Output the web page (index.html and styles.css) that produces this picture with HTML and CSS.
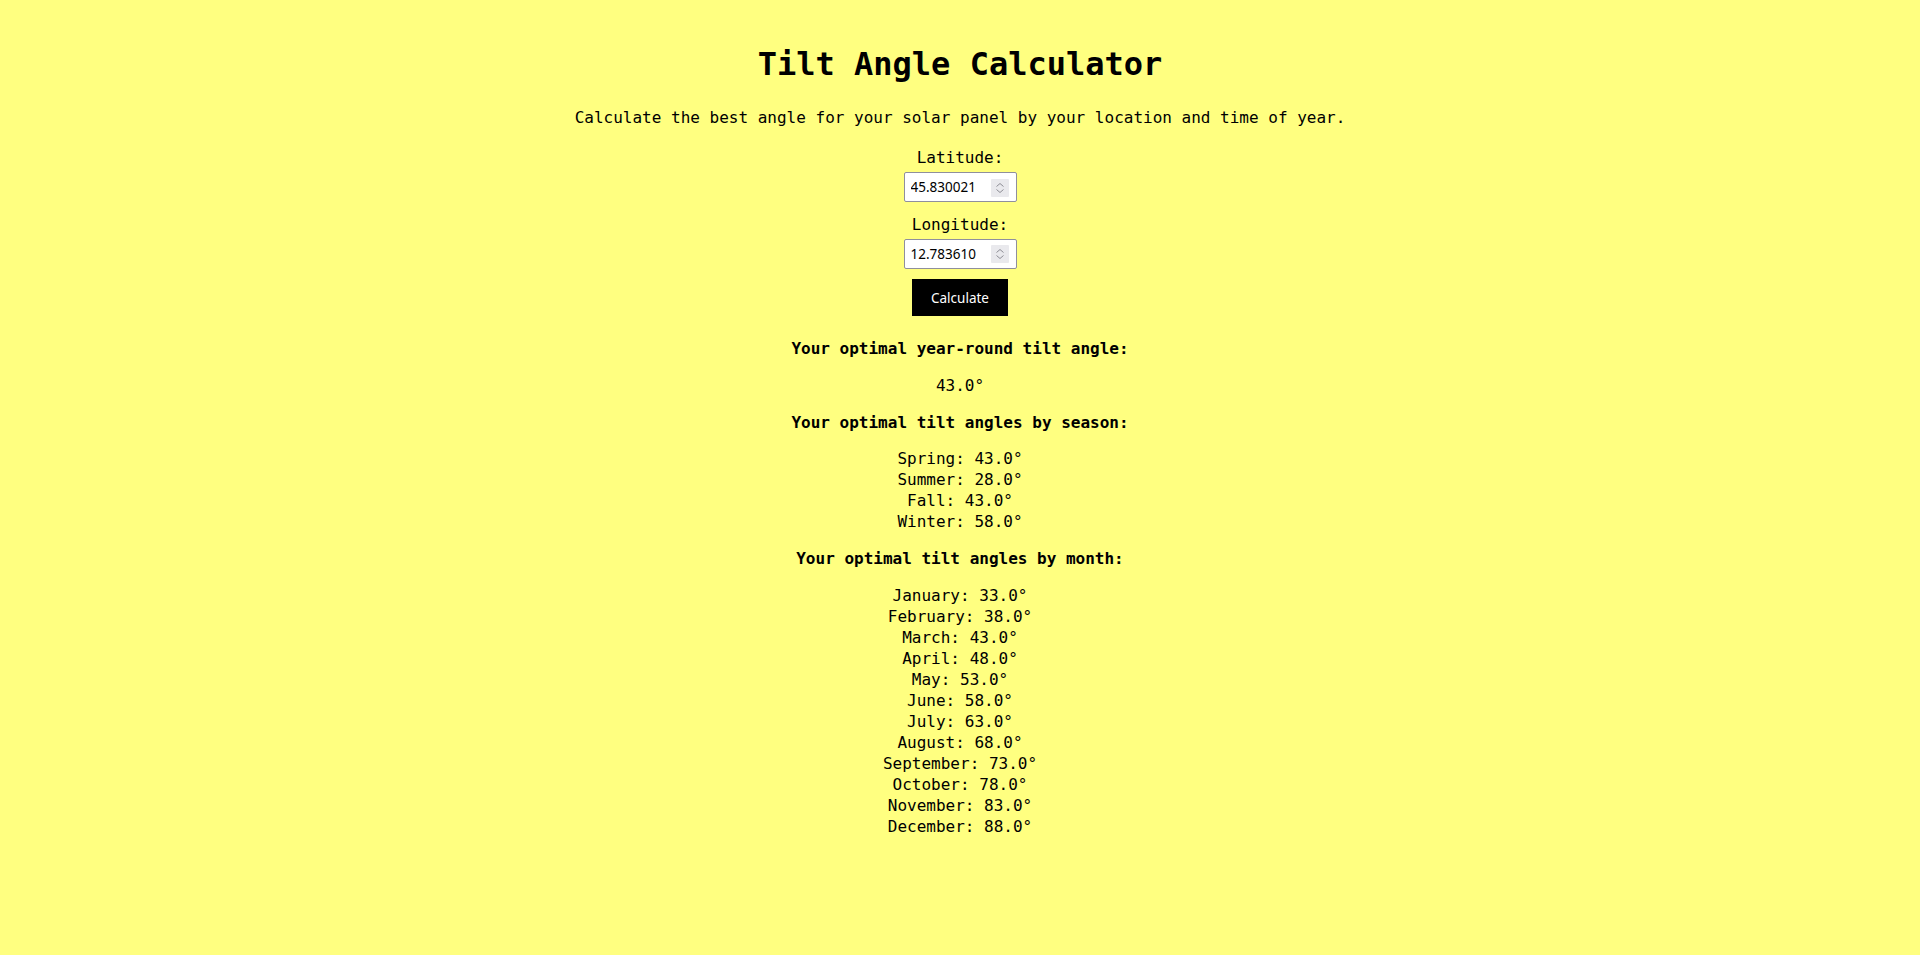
FILE: index.html
```html
<!DOCTYPE html>
<html lang="en">
<head>
<meta charset="utf-8">
<title>Tilt Angle Calculator</title>
<link rel="stylesheet" href="styles.css">
</head>
<body>
<main class="calculator">
  <h1 class="title">Tilt Angle Calculator</h1>
  <p class="subtitle">Calculate the best angle for your solar panel by your location and time of year.</p>
  <form class="calc-form">
    <label class="field-label" for="lat">Latitude:</label>
    <span class="field-wrap">
      <input class="field-input" id="lat" type="number" value="45.830021" step="any">
      <span class="spinner" aria-hidden="true">
        <svg width="18" height="18" viewBox="0 0 18 18"><path d="M5.5 7.5 L9 4.5 L12.5 7.5" fill="none" stroke="#8d8d95" stroke-width="1"/><path d="M5.5 10.5 L9 13.5 L12.5 10.5" fill="none" stroke="#8d8d95" stroke-width="1"/></svg>
      </span>
    </span>
    <label class="field-label field-label-second" for="lon">Longitude:</label>
    <span class="field-wrap">
      <input class="field-input" id="lon" type="number" value="12.783610" step="any">
      <span class="spinner" aria-hidden="true">
        <svg width="18" height="18" viewBox="0 0 18 18"><path d="M5.5 7.5 L9 4.5 L12.5 7.5" fill="none" stroke="#8d8d95" stroke-width="1"/><path d="M5.5 10.5 L9 13.5 L12.5 10.5" fill="none" stroke="#8d8d95" stroke-width="1"/></svg>
      </span>
    </span>
    <button class="calc-button" type="button">Calculate</button>
  </form>
  <section class="results">
    <h2 class="result-heading">Your optimal year-round tilt angle:</h2>
    <p class="result-value">43.0°</p>
    <h2 class="result-heading">Your optimal tilt angles by season:</h2>
    <ul class="result-list">
      <li>Spring: 43.0°</li>
      <li>Summer: 28.0°</li>
      <li>Fall: 43.0°</li>
      <li>Winter: 58.0°</li>
    </ul>
    <h2 class="result-heading">Your optimal tilt angles by month:</h2>
    <ul class="result-list month-list">
      <li>January: 33.0°</li>
      <li>February: 38.0°</li>
      <li>March: 43.0°</li>
      <li>April: 48.0°</li>
      <li>May: 53.0°</li>
      <li>June: 58.0°</li>
      <li>July: 63.0°</li>
      <li>August: 68.0°</li>
      <li>September: 73.0°</li>
      <li>October: 78.0°</li>
      <li>November: 83.0°</li>
      <li>December: 88.0°</li>
    </ul>
  </section>
</main>
</body>
</html>
```

FILE: styles.css
```css
html, body {
  margin: 0;
  padding: 0;
  background: #ffff80;
}

body {
  font-family: "DejaVu Sans Mono", "Liberation Mono", monospace;
  font-size: 16px;
  line-height: 20.8px;
  color: #000;
}

.calculator {
  display: flex;
  flex-direction: column;
  align-items: center;
  text-align: center;
  padding-top: 43.5px;
}

.title {
  margin: 0 0 22.5px;
  font-size: 32px;
  line-height: 41.6px;
  font-weight: 700;
}

.subtitle {
  margin: 0 0 19.5px;
}

.calc-form {
  display: flex;
  flex-direction: column;
  align-items: center;
  margin: 0;
}

.field-label {
  display: block;
}

.field-label-second {
  margin-top: 12.5px;
}

.field-wrap {
  position: relative;
  display: block;
  width: 113px;
  height: 30px;
  margin-top: 3.5px;
}

.field-input {
  box-sizing: border-box;
  display: block;
  width: 113px;
  height: 30px;
  margin: 0;
  padding: 5px 28px 5px 6px;
  font-family: "Noto Sans", "Open Sans", sans-serif;
  font-size: 13.5px;
  color: #000;
  background: #fff;
  border: 1px solid #8f8f9d;
  border-radius: 2px;
  -moz-appearance: textfield;
}

.field-input::-webkit-inner-spin-button,
.field-input::-webkit-outer-spin-button {
  -webkit-appearance: none;
  margin: 0;
}

.spinner {
  position: absolute;
  top: 6.5px;
  right: 7.5px;
  width: 18px;
  height: 18px;
  background: #e9e9ed;
  border-radius: 1px;
}

.spinner svg {
  display: block;
}

.calc-button {
  box-sizing: border-box;
  width: 96px;
  height: 37px;
  margin-top: 10.5px;
  padding: 0 16px;
  font-family: "Noto Sans", "Open Sans", sans-serif;
  font-size: 13.5px;
  color: #fff;
  background: #000;
  border: none;
  border-radius: 0;
}

.results {
  display: flex;
  flex-direction: column;
  align-items: center;
  gap: 16px;
  margin-top: 22.5px;
}

.result-heading {
  margin: 0;
  font-size: 16px;
  line-height: 20.8px;
  font-weight: 700;
}

.result-value {
  margin: 0;
}

.result-list {
  list-style: none;
  margin: 0;
  padding: 0;
}

.month-list li {
  line-height: 21px;
}
```
